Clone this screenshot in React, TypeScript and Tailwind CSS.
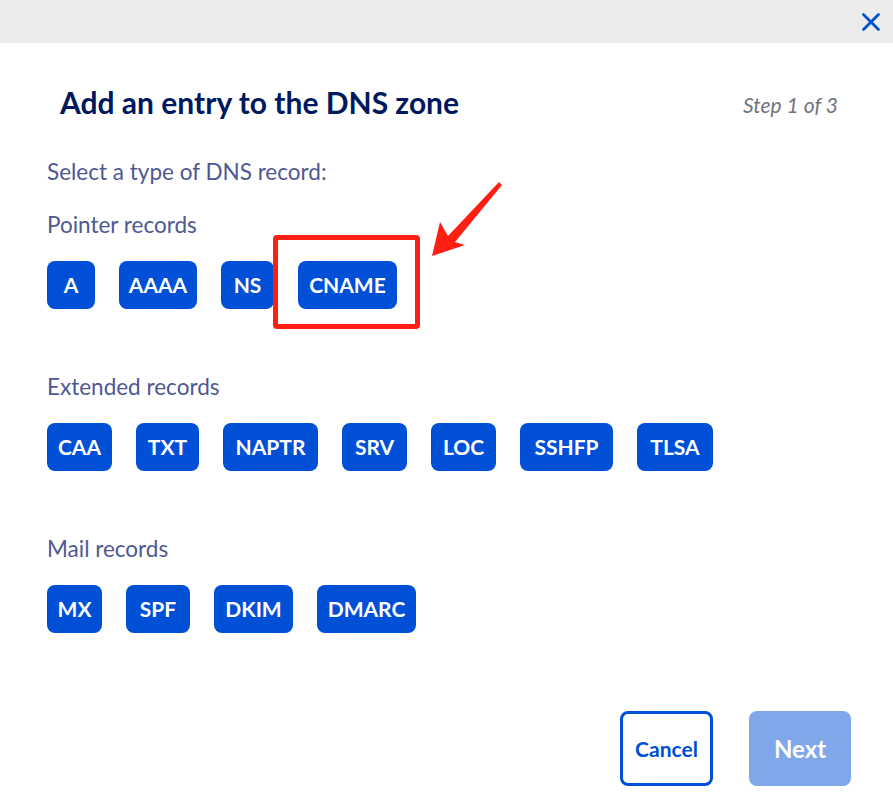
import { X } from "lucide-react";

type Rec = { label: string; w: string };

const pointer: Rec[] = [
  { label: "A", w: "w-[48px]" },
  { label: "AAAA", w: "w-[78px]" },
  { label: "NS", w: "w-[53px]" },
];

const extended: Rec[] = [
  { label: "CAA", w: "w-[65px]" },
  { label: "TXT", w: "w-[63px]" },
  { label: "NAPTR", w: "w-[95px]" },
  { label: "SRV", w: "w-[65px]" },
  { label: "LOC", w: "w-[65px]" },
  { label: "SSHFP", w: "w-[93px]" },
  { label: "TLSA", w: "w-[76px]" },
];

const mail: Rec[] = [
  { label: "MX", w: "w-[55px]" },
  { label: "SPF", w: "w-[64px]" },
  { label: "DKIM", w: "w-[79px]" },
  { label: "DMARC", w: "w-[99px]" },
];

function RecordButton({ label, w }: Rec) {
  return (
    <button
      className={`${w} h-[48px] shrink-0 rounded-lg bg-[#0050d7] text-white text-[21px] font-bold flex items-center justify-center`}
    >
      {label}
    </button>
  );
}

export default function App() {
  return (
    <div
      className="w-[893px] h-[807px] bg-white relative overflow-hidden"
      style={{ fontFamily: "Lato, 'Open Sans', sans-serif" }}
    >
      {/* Top bar */}
      <div className="h-[43px] bg-[#ecedea] flex items-center justify-end pr-[7px]">
        <X size={30} strokeWidth={2.2} className="text-[#0050d7]" />
      </div>

      {/* Heading */}
      <div className="mt-[41px] h-[36px] pl-[60px] pr-[55px] flex items-center justify-between">
        <h1 className="text-[30px] leading-[36px] font-bold text-[#00185e]">
          Add an entry to the DNS zone
        </h1>
        <span className="text-[21px] leading-[28px] italic text-[#6f7580] mt-[5px]">Step 1 of 3</span>
      </div>

      <div className="pl-[47px]">
        <p className="mt-[38px] text-[22.5px] leading-[28px] text-[#4e5893]">
          Select a type of DNS record:
        </p>

        {/* Pointer records */}
        <p className="mt-[25px] text-[22.5px] leading-[28px] text-[#4e5893]">Pointer records</p>
        <div className="mt-[22px] flex gap-[24px]">
          {pointer.map((r) => (
            <RecordButton key={r.label} {...r} />
          ))}
          <div className="relative">
            <RecordButton label="CNAME" w="w-[99px]" />
            <div className="absolute left-[-25px] top-[-26px] w-[147px] h-[94px] border-[5px] border-[#ff1e12] rounded-[4px]" />
          </div>
        </div>

        {/* Extended records */}
        <p className="mt-[64px] text-[22.5px] leading-[28px] text-[#4e5893]">Extended records</p>
        <div className="mt-[22px] flex gap-[24px]">
          {extended.map((r) => (
            <RecordButton key={r.label} {...r} />
          ))}
        </div>

        {/* Mail records */}
        <p className="mt-[64px] text-[22.5px] leading-[28px] text-[#4e5893]">Mail records</p>
        <div className="mt-[22px] flex gap-[24px]">
          {mail.map((r) => (
            <RecordButton key={r.label} {...r} />
          ))}
        </div>
      </div>

      {/* Footer */}
      <div className="mt-[78px] pr-[42px] flex justify-end gap-[36px]">
        <button className="w-[93px] h-[75px] rounded-lg border-[3px] border-[#0050d7] text-[#0050d7] text-[21px] font-bold">
          Cancel
        </button>
        <button className="w-[102px] h-[75px] rounded-lg bg-[#80a7ea] text-white text-[24px] font-bold">
          Next
        </button>
      </div>

      {/* Red arrow annotation */}
      <svg className="absolute left-[420px] top-[175px]" width="90" height="90" viewBox="0 0 90 90">
        <polygon
          points="12,81 20,47 28,61 79,7 82,10 35,67 45,70"
          fill="#ff1e12"
        />
      </svg>
    </div>
  );
}
